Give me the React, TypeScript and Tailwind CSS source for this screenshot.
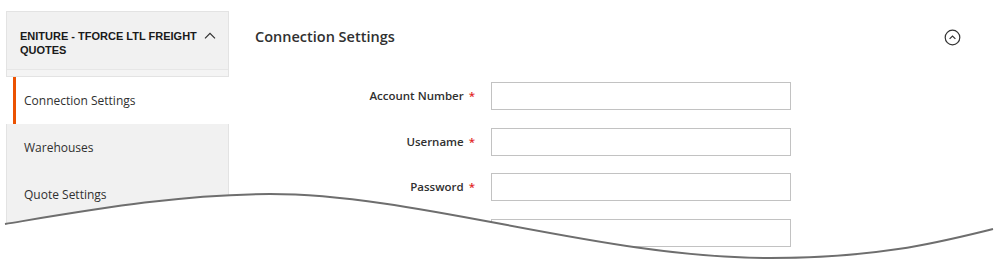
const fields = ['Account Number', 'Username', 'Password', 'Access Key']

const navItems = [
    { label: 'Connection Settings', active: true },
    { label: 'Warehouses', active: false },
    { label: 'Quote Settings', active: false },
    { label: 'Handling Unit', active: false },
]

const Sidebar = () => (
    <div className="mt-[11px] ml-[6px] w-[223px] shrink-0">
        <div className="border border-[#e3e3e3] bg-[#f1f1f1]">
            <div className="flex items-start pt-[17px] pb-[12px] pl-[13px]">
                <span className="w-[181px] text-[11px] leading-[14px] font-bold uppercase text-[#1a1a1a] font-['Liberation_Sans',sans-serif]">
                    Eniture - TForce LTL Freight Quotes
                </span>
                <svg className="mt-[3px] ml-[3px] w-[12px] h-[7px] shrink-0" viewBox="0 0 12 7" fill="none">
                    <path d="M1 6.3 L6 1.3 L11 6.3" stroke="#303030" strokeWidth="1.2" />
                </svg>
            </div>
            <div className="h-[7px] border-t border-[#e6e6e6] bg-[#f4f4f4]" />
        </div>
        {navItems.map((item) =>
            item.active ? (
                <div key={item.label} className="bg-white pl-[7px]">
                    <div className="h-[47px] flex items-center border-l-[3px] border-[#eb5202] pl-[8px] text-[12px] text-[#303030]">
                        {item.label}
                    </div>
                </div>
            ) : (
                <div
                    key={item.label}
                    className="h-[47px] flex items-center bg-[#f1f1f1] border-x border-[#e3e3e3] pl-[17px] text-[12px] text-[#303030]"
                >
                    {item.label}
                </div>
            ),
        )}
    </div>
)

const Section = () => (
    <div className="flex-1 ml-[26px] pr-[38px]">
        <div className="flex items-center justify-between h-[52px] mt-[11px]">
            <h2 className="text-[14.5px] font-semibold text-[#303030]">Connection Settings</h2>
            <svg className="w-[17px] h-[17px] mr-[1px]" viewBox="0 0 17 17" fill="none">
                <circle cx="8.5" cy="8.5" r="7.3" stroke="#333" strokeWidth="1.2" />
                <path d="M5.6 9.9 L8.5 7 L11.4 9.9" stroke="#333" strokeWidth="1.2" />
            </svg>
        </div>
        <div className="mt-[19px] flex flex-col gap-[17.5px]">
            {fields.map((f) => (
                <div key={f} className="flex items-center">
                    <label className="w-[236px] text-right text-[11.5px] font-semibold text-[#303030] pr-[16px]">
                        {f} <span className="text-[#e22626] ml-[2px]">*</span>
                    </label>
                    <input className="w-[300px] h-[28px] border border-[#c2c2c2] bg-white" />
                </div>
            ))}
        </div>
    </div>
)

export default function App() {
    return (
        <div className="relative w-[1000px] h-[276px] overflow-hidden bg-white font-['Open_Sans',sans-serif]">
            <div className="flex">
                <Sidebar />
                <Section />
            </div>
            <svg className="absolute inset-0 w-[1000px] h-[276px]" viewBox="0 0 1000 276" fill="none">
                <path
                    d="M0 224.5 L5 224 C90 210 180 194 270 194 C420 194 600 258 770 258 C880 258 940 242 993 229 L1000 229 L1000 276 L0 276 Z"
                    fill="#ffffff"
                />
                <path
                    d="M5 224 C90 210 180 194 270 194 C420 194 600 258 770 258 C880 258 940 242 993 229"
                    stroke="#6e6e6e"
                    strokeWidth="2"
                />
            </svg>
        </div>
    )
}
